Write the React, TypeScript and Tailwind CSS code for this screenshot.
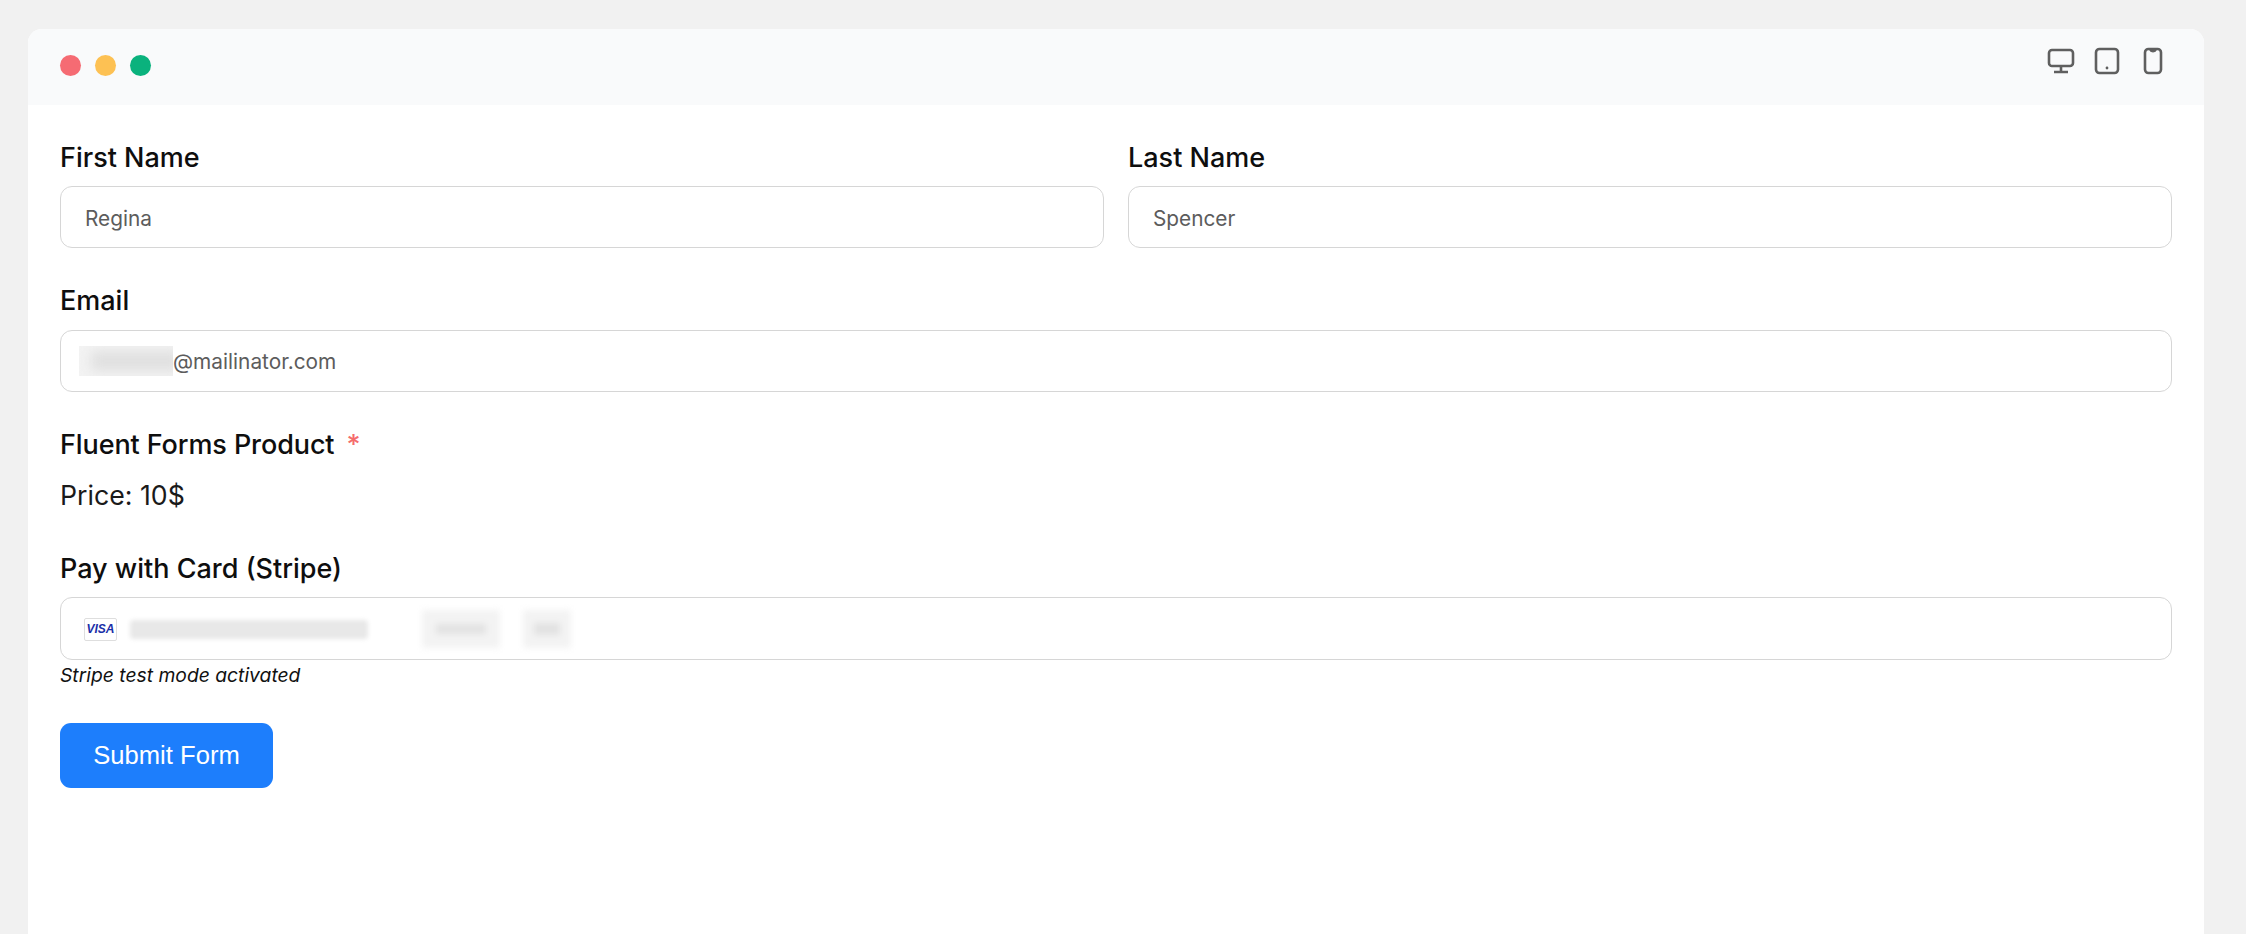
import React from "react";

const fieldLabel = "block h-[36px] text-[27px] leading-[39px] font-medium text-[#0e0e0e]";
const fieldBox =
  "flex h-[62px] items-center rounded-[12px] border border-[#d6d6d6] bg-white text-[20.8px] text-[#5c5c5c]";

const DeviceIcons = () => (
  <div className="flex items-start text-[#5f5f5f]">
    <svg width="28" height="28" viewBox="0 0 28 28" fill="none" stroke="currentColor" strokeWidth="2.6">
      <rect x="2" y="3" width="24" height="16" rx="3" />
      <path d="M14 19v6M7 25h14" />
    </svg>
    <svg className="ml-[19px]" width="26" height="28" viewBox="0 0 26 28" fill="none" stroke="currentColor" strokeWidth="2.6">
      <rect x="2" y="2" width="22" height="24" rx="3.5" />
      <circle cx="13" cy="21" r="1.4" fill="currentColor" stroke="none" />
    </svg>
    <svg className="ml-[23px]" width="20" height="28" viewBox="0 0 20 28" fill="none" stroke="currentColor" strokeWidth="2.6">
      <rect x="2" y="2" width="16" height="24" rx="3.5" />
      <path d="M6.5 2.5q.5 2.5 3.5 2.5t3.5-2.5" fill="currentColor" strokeWidth="1" />
    </svg>
  </div>
);

const Dots = () => (
  <div className="flex items-center gap-[14px]">
    <span className="h-[21px] w-[21px] rounded-full bg-[#f56b73]" />
    <span className="h-[21px] w-[21px] rounded-full bg-[#fdc153]" />
    <span className="h-[21px] w-[21px] rounded-full bg-[#0ab27d]" />
  </div>
);

export default function App() {
  return (
    <div className="flex h-screen flex-col overflow-hidden bg-[#f1f1f1] pt-[29px] pl-[28px] pr-[42px] font-['Inter',sans-serif]">
      <div className="flex flex-1 flex-col overflow-hidden rounded-t-[14px] bg-white">
        <div className="flex h-[76px] shrink-0 items-start justify-between bg-[#f9fafb] pl-[32px] pr-[41px]">
          <div className="pt-[26px]">
            <Dots />
          </div>
          <div className="pt-[18px]">
            <DeviceIcons />
          </div>
        </div>

        <form className="flex flex-col px-[32px] pt-[33px]">
          <div className="grid grid-cols-2 gap-x-[24px]">
            <div>
              <label className={fieldLabel}>First Name</label>
              <div className={`${fieldBox} mt-[12px] pl-[24px] pt-[4px]`}>Regina</div>
            </div>
            <div>
              <label className={fieldLabel}>Last Name</label>
              <div className={`${fieldBox} mt-[12px] pl-[24px] pt-[4px]`}>Spencer</div>
            </div>
          </div>

          <div className="mt-[33px]">
            <label className={fieldLabel}>Email</label>
            <div className={`${fieldBox} mt-[13px] pl-[18px]`}>
              <span className="block h-[30px] w-[94px] overflow-hidden bg-[#f3f3f3]">
                <span className="ml-[12px] mt-[5px] block h-[20px] w-[90px] bg-[#e0e0e0] blur-[6px]" />
              </span>
              <span className="pt-[2px]">@mailinator.com</span>
            </div>
          </div>

          <div className="mt-[33px]">
            <label className={`${fieldLabel} tracking-[-0.1px]`}>
              Fluent Forms Product <span className="ml-[5px] text-[#f56c6c]">*</span>
            </label>
            <p className="mt-[16px] h-[36px] text-[26.7px] leading-[36px] text-[#1a1a1a]">Price: 10$</p>
          </div>

          <div className="mt-[36px]">
            <label className={fieldLabel}>Pay with Card (Stripe)</label>
            <div className={`${fieldBox} mt-[12px] h-[63px] pl-[23px] pt-[1px]`}>
              <span className="flex h-[23px] w-[33px] items-center justify-center rounded-[2px] border border-[#dedede] font-['Liberation_Sans',sans-serif] text-[12px] font-bold italic text-[#1a2fa8]">
                VISA
              </span>
              <span className="ml-[13px] h-[19px] w-[238px] rounded-[4px] bg-[#e8e8e8] blur-[2px]" />
              <span className="ml-[54px] flex h-[38px] w-[78px] items-center justify-center bg-[#f3f3f3] blur-[3px]">
                <span className="h-[10px] w-[50px] bg-[#e2e2e2]" />
              </span>
              <span className="ml-[23px] flex h-[38px] w-[48px] items-center justify-center bg-[#f3f3f3] blur-[3px]">
                <span className="h-[12px] w-[26px] bg-[#e2e2e2]" />
              </span>
            </div>
            <p className="h-[28px] pt-[1px] text-[19.3px] leading-[28px] italic text-[#111111]">Stripe test mode activated</p>
          </div>

          <button
            type="button"
            className="mt-[35px] h-[65px] w-[213px] rounded-[11px] bg-[#1d7efc] font-['Liberation_Sans',sans-serif] text-[25.6px] text-white"
          >
            Submit Form
          </button>
        </form>
      </div>
    </div>
  );
}
